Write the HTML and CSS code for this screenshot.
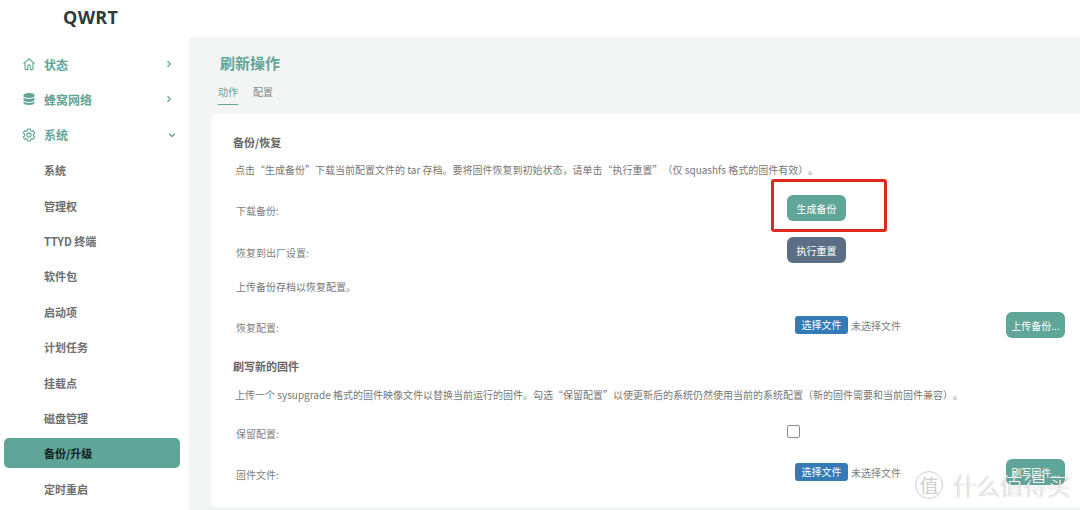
FILE: index.html
```html
<!DOCTYPE html>
<html>
	<head>
		<meta charset="utf-8">
		<title>QWRT - 刷新操作</title>
		<link rel="stylesheet" href="styles.css">
	</head>
	<body>
	<div class="sidebar">
		<div class="logo">QWRT</div>
		<div class="navItem topItem">
			<svg class="navIcon" viewBox="0 0 14 14"><path d="M1.500 6.600 7 1.800l5.500 4.800M3 5.600v6.200a.8.8 0 0 0 .8.8h1.900V9.200a1.300 1.300 0 0 1 2.600 0v3.400h1.900a.8.8 0 0 0 .8-.8V5.600"/></svg>
			<span>状态</span>
			<svg class="chevron" viewBox="0 0 8 8"><path d="M2.500 1.200 5.300 4 2.500 6.800"/></svg>
		</div>
		<div class="navItem topItem">
			<svg class="navIcon solid" viewBox="0 0 14 14"><path d="M1.500 3c0-1.200 2.500-2 5.500-2s5.500.8 5.500 2v1c0 1.200-2.500 2-5.500 2s-5.500-.8-5.500-2zM1.500 5.600C2.600 6.600 4.700 7 7 7s4.400-.4 5.500-1.400V8c0 1.200-2.500 2-5.500 2s-5.500-.8-5.500-2zM1.500 9.600C2.600 10.600 4.700 11 7 11s4.400-.4 5.500-1.400V11c0 1.200-2.500 2-5.500 2s-5.500-.8-5.500-2z"/></svg>
			<span>蜂窝网络</span>
			<svg class="chevron" viewBox="0 0 8 8"><path d="M2.500 1.200 5.300 4 2.500 6.800"/></svg>
		</div>
		<div class="navItem topItem">
			<svg class="navIcon" viewBox="0 0 14 14"><path d="M5.800 1h2.400l.4 1.700 1.200.7 1.700-.5 1.200 2-1.300 1.300v1.600l1.300 1.300-1.200 2-1.700-.5-1.200.7L8.200 13H5.800l-.4-1.700-1.200-.7-1.700.5-1.200-2 1.300-1.300V6.200L1.300 4.900l1.200-2 1.700.5 1.200-.7z"/><circle cx="7" cy="7" r="2.100"/></svg>
			<span>系统</span>
			<svg class="chevron open" viewBox="0 0 8 8"><path d="M1.200 2.700 4 5.500l2.800-2.800"/></svg>
		</div>
		<div class="navItem">系统</div>
		<div class="navItem">管理权</div>
		<div class="navItem">TTYD 终端</div>
		<div class="navItem">软件包</div>
		<div class="navItem">启动项</div>
		<div class="navItem">计划任务</div>
		<div class="navItem">挂载点</div>
		<div class="navItem">磁盘管理</div>
		<div class="navItem active">备份/升级</div>
		<div class="navItem">定时重启</div>
	</div>
	<div class="rightSide">
		<div class="topBar"></div>
		<div class="mainArea">
			<h2 class="pageTitle">刷新操作</h2>
			<div class="tabs">
				<span class="tab current">动作</span>
				<span class="tab">配置</span>
			</div>
			<div class="card">
				<h3 class="sectionTitle">备份/恢复</h3>
				<p class="descr firstDescr">点击“生成备份”下载当前配置文件的 tar 存档。要将固件恢复到初始状态，请单击“执行重置”（仅 squashfs 格式的固件有效）。</p>
				<div class="formRow backupRow">
					<label class="rowLabel">下载备份:</label>
					<div class="rowControl"><button class="btn">生成备份</button></div>
				</div>
				<div class="formRow resetRow">
					<label class="rowLabel">恢复到出厂设置:</label>
					<div class="rowControl"><button class="btn grey">执行重置</button></div>
				</div>
				<p class="descr uploadNote">上传备份存档以恢复配置。</p>
				<div class="formRow restoreRow">
					<label class="rowLabel">恢复配置:</label>
					<div class="rowControl">
						<span class="fileBtn">选择文件</span><span class="fileName">未选择文件</span>
						<button class="btn pushRight">上传备份...</button>
					</div>
				</div>
				<h3 class="sectionTitle flashTitle">刷写新的固件</h3>
				<p class="descr flashDescr">上传一个 sysupgrade 格式的固件映像文件以替换当前运行的固件。勾选“保留配置”以使更新后的系统仍然使用当前的系统配置（新的固件需要和当前固件兼容）。</p>
				<div class="formRow keepRow">
					<label class="rowLabel">保留配置:</label>
					<div class="rowControl"><span class="checkBox"></span></div>
				</div>
				<div class="formRow flashRow">
					<label class="rowLabel">固件文件:</label>
					<div class="rowControl">
						<span class="fileBtn">选择文件</span><span class="fileName">未选择文件</span>
						<button class="btn pushRight">刷写固件...</button>
					</div>
				</div>
			</div>
		</div>
	</div>
	<div class="redBox"></div>
	<div class="watermark">
		<span class="markCircle">值</span>
		<span class="markText">什么值得买</span>
	</div>
	</body>
</html>
```

FILE: styles.css
```css
html, body{margin:0; padding:0; height:510px; overflow:hidden;}
body{display:flex; background:#fff; color:#666; font-family:"Noto Sans CJK SC","Open Sans",sans-serif; font-size:10px;}
h2, h3, p{margin:0;}

.sidebar{width:189px; flex:none; background:#fff;}
.logo{height:35px; margin-bottom:14px; padding-left:63px; line-height:35px; font-family:"Open Sans",sans-serif; font-size:18px; font-weight:700; letter-spacing:.3px; color:#2f3a3c;}
.navItem{display:flex; align-items:center; height:30px; margin:0 9px 5.4px 4px; padding:0 6px 0 40px; border-radius:5px; font-size:11px; font-weight:700; color:#6b6f70;}
.topItem{position:relative; font-size:12px; color:#62a597;}
.navIcon{position:absolute; left:18px; top:8px; width:14px; height:14px; fill:none; stroke:#62a597; stroke-width:1.1;}
.navIcon.solid{fill:#62a597; stroke:none;}
.chevron{margin-left:auto; width:8px; height:8px; fill:none; stroke:#62a597; stroke-width:1.3; margin-right:1px;}
.chevron.open{margin-right:-2px;}
.navItem.active{background:#5fa598; color:#12201d;}

.rightSide{flex:1; min-width:0; display:flex; flex-direction:column;}
.topBar{height:37px; flex:none; background:#fff;}
.mainArea{flex:1; background:#f3f5f5; padding:16px 0 0 22px;}
.pageTitle{height:20px; margin-left:9px; line-height:20px; font-size:15px; font-weight:700; color:#62a597;}
.tabs{display:flex; gap:15px; height:23px; margin:9px 0 9px 7px;}
.tab{height:22px; line-height:20px; color:#888;}
.tab.current{height:23px; box-sizing:border-box; border-bottom:1px solid #62a597; color:#62a597;}

.card{background:#fff; border-radius:5px 0 0 5px; padding:18px 15px 22px 22px;}
.sectionTitle{height:20px; line-height:20px; font-size:11px; font-weight:700; color:#666;}
.descr{height:20px; padding-left:2px; line-height:20px; white-space:nowrap; color:#777; text-spacing-trim:space-all;}
.firstDescr{margin-top:8px;}
.uploadNote{margin-top:14px; padding-left:3px;}
.flashTitle{margin-top:18px;}
.flashDescr{margin-top:9px;}

.formRow{display:flex; height:26px; padding-left:3px;}
.backupRow{margin-top:15px;}
.resetRow{margin-top:16px;}
.restoreRow{margin-top:15px;}
.keepRow{margin-top:13px;}
.flashRow{margin-top:15px;}
.rowLabel{width:551px; flex:none; box-sizing:border-box; padding-top:6px; line-height:20px; color:#808080;}
.rowControl{flex:1; display:flex; align-items:center;}

.btn{width:59px; height:26px; padding:0; border:0; border-radius:6px; background:#5fa598; color:#fff; font-family:inherit; font-size:10px;}
.btn.grey{background:#5c6e85;}
.pushRight{margin-left:auto;}
.fileBtn{width:53px; height:18px; margin-left:8px; border-radius:3px; background:#337ab7; color:#fff; line-height:18px; text-align:center;}
.fileName{margin-left:3px; color:#808080;}
.checkBox{width:11px; height:11px; border:1px solid #8a8a8a; border-radius:2px; background:#fff;}

.redBox{position:absolute; left:771px; top:179px; width:110px; height:47px; border:3px solid #e0281e; border-radius:3px;}
.watermark{position:absolute; left:915px; top:471px; display:flex; align-items:center; gap:10px;}
.markCircle{width:26px; height:26px; border:1px solid #d0d0d0; border-radius:50%; line-height:26px; text-align:center; font-size:19px; color:#cfcfcf;}
.markText{font-size:23.5px; line-height:28px; font-weight:300; color:#f4f4f4; text-shadow:0 0 1px #8f8f8f;}
```
